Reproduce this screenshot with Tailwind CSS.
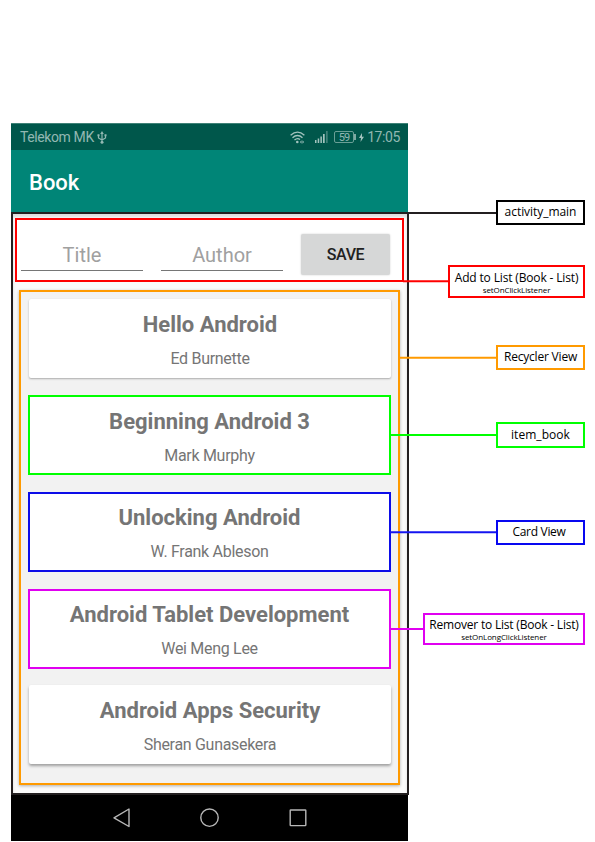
<!DOCTYPE html>
<html lang="en">
<head>
<meta charset="utf-8">
<title>Book</title>
<script src="https://cdn.jsdelivr.net/npm/@tailwindcss/browser@4"></script>
</head>
<body class="relative h-[842px] w-[595px] overflow-hidden bg-white pt-[123px] pl-[11px] font-['Roboto',sans-serif]">
<div class="flex h-[718px] w-[397px] flex-col bg-[#fafafa]">
  <header class="flex h-[27px] shrink-0 items-center border-t border-[#3f8277] bg-[#00574b] pr-[8px] pl-[9px] text-[14px] text-[#92b8b2]">
    <span class="tracking-[-0.400px] whitespace-nowrap">Telekom MK</span>
    <svg class="ml-[3px] h-[13px] w-[10px]" viewBox="0 0 9 13" fill="none" stroke="#92b8b2" stroke-width="1.200"><path d="M4.500 2v9M1 4v3l3.500 2L8 7V4"/><path d="M2.700 3l1.800-3L6.300 3zM0 3.300h2v2H0zM7 3.300h2v2H7z" fill="#92b8b2" stroke="none"/><circle cx="4.500" cy="11.300" r="1.500" fill="#92b8b2" stroke="none"/></svg>
    <div class="ml-auto flex items-center">
      <svg class="h-[13px] w-[15px]" viewBox="0 0 15 13" fill="none" stroke="#a3c3be" stroke-width="1.300"><path d="M.6 4.200Q7.500-2 14.400 4.200M2.500 6.700Q7.500 2.200 12.500 6.700M4.500 9Q7.500 6.400 10 8.600"/><circle cx="7.300" cy="11" r="1.300" fill="#a3c3be" stroke="none"/><path d="M10 11l1.500-1.800v3.600zM14 11l-1.500-1.800v3.600z" fill="#a3c3be" stroke="none"/></svg>
      <svg class="ml-[10px] h-[12px] w-[13px]" viewBox="0 0 13 12" fill="#a3c3be"><path d="M0 9h1.500v3H0zM2.700 7.500h1.500V12H2.700zM5.400 5.500h1.500V12H5.400zM8 3h1.700v9H8z"/><path d="M11 0h1.700v12H11z" opacity=".4"/></svg>
      <div class="ml-[6px] flex h-[12px] w-[20px] items-center justify-center rounded-[2px] border border-[#6a9f96] text-[11px] leading-none tracking-[-0.800px]">59</div>
      <div class="h-[6px] w-[2px] bg-[#7eaaa3]"></div>
      <svg class="ml-[3px] h-[9px] w-[5px]" viewBox="0 0 5 9" fill="#a3c3be"><path d="M3 0L0 5h2L1.500 9L5 3.700H3z"/></svg>
      <span class="ml-[3px] text-[14px] tracking-[-0.400px]">17:05</span>
    </div>
  </header>
  <div class="flex h-[62px] shrink-0 items-center bg-[#008577] pt-[3px] pl-[18px] text-[22px] font-medium text-white">Book</div>
  <main class="-mr-px flex h-[583px] shrink-0 flex-col border-2 border-[#231f20] bg-[#fafafa] pt-[4px] pl-[2px] shadow-[inset_0_3px_3px_rgba(0,0,0,0.12)]">
    <form class="flex h-[64px] w-[389px] border-2 border-[#ff0000] bg-white pl-[4px]">
      <div class="mt-[19px] h-[32px] w-[122px] border-b border-[#767676] text-center text-[20px] leading-[33px] text-[#a0a0a0]">Title</div>
      <div class="mt-[19px] ml-[18px] h-[32px] w-[122px] border-b border-[#767676] text-center text-[20px] leading-[33px] text-[#a0a0a0]">Author</div>
      <div class="mt-[14px] ml-[18px] flex h-[41px] w-[89px] items-center justify-center rounded-[2px] bg-[#d6d7d7] pt-px text-[16px] font-medium tracking-[-0.400px] text-[#212121] shadow-[0_0_2px_rgba(0,0,0,0.2)]">SAVE</div>
    </form>
    <section class="mt-[8px] ml-[4px] flex h-[495px] w-[381px] flex-col gap-[17px] border-2 border-[#ff9a00] bg-[#f2f2f2] px-[7px] pt-[6px] shadow-[0_1px_3px_rgba(0,0,0,0.3)]">
      <article class="mt-px ml-px flex h-[79px] shrink-0 flex-col items-center rounded-[2px] bg-white pt-[12px] text-[#757575] shadow-[0_1px_2px_rgba(0,0,0,0.3)]"><h2 class="text-[22px] leading-[28px] font-bold">Hello Android</h2><p class="mt-[10px] text-[16px] leading-[20px] tracking-[-0.300px]">Ed Burnette</p></article>
      <article class="flex h-[80px] shrink-0 flex-col items-center border-2 border-[#00ff00] bg-white pt-[11px] text-[#757575]"><h2 class="text-[22px] leading-[28px] font-bold">Beginning Android 3</h2><p class="mt-[10px] text-[16px] leading-[20px] tracking-[-0.300px]">Mark Murphy</p></article>
      <article class="flex h-[80px] shrink-0 flex-col items-center border-2 border-[#0c0ce8] bg-white pt-[10px] text-[#757575]"><h2 class="text-[22px] leading-[28px] font-bold">Unlocking Android</h2><p class="mt-[10px] text-[16px] leading-[20px] tracking-[-0.300px]">W. Frank Ableson</p></article>
      <article class="flex h-[80px] shrink-0 flex-col items-center border-2 border-[#e000f0] bg-white pt-[10px] text-[#757575]"><h2 class="text-[22px] leading-[28px] font-bold">Android Tablet Development</h2><p class="mt-[10px] text-[16px] leading-[20px] tracking-[-0.300px]">Wei Meng Lee</p></article>
      <article class="-mt-px ml-px flex h-[79px] shrink-0 flex-col items-center rounded-[2px] bg-white pt-[12px] text-[#757575] shadow-[0_2px_3px_rgba(0,0,0,0.35)]"><h2 class="text-[22px] leading-[28px] font-bold">Android Apps Security</h2><p class="mt-[10px] text-[16px] leading-[20px] tracking-[-0.300px]">Sheran Gunasekera</p></article>
    </section>
  </main>
  <nav class="flex grow items-center bg-black">
    <svg class="h-[46px] w-[397px]" viewBox="0 0 397 46" fill="none" stroke="#b8b8b8" stroke-width="1.400" stroke-linejoin="round"><path d="M118 14v17.500L103 22.800z"/><circle cx="198.500" cy="22.700" r="8.700"/><rect x="279.200" y="15" width="15.600" height="15.600" rx=".6"/></svg>
  </nav>
</div>

<svg class="absolute top-0 left-0 h-[842px] w-[595px]" viewBox="0 0 595 842" fill="none" stroke-width="2"><path d="M407 213H497" stroke="#231f20"/><path d="M403 281.300H449" stroke="#ff0000"/><path d="M399 357.700H497" stroke="#ff9a00"/><path d="M390 435H497" stroke="#00ff00"/><path d="M390 532.200H497" stroke="#1414f0"/><path d="M390 629H425" stroke="#e000f0"/></svg>
<div class="absolute top-[200px] left-[496px] flex h-[25px] w-[89px] justify-center border-2 border-black bg-white font-['Open_Sans',sans-serif] text-[12px] leading-[20px] text-black"><span class="tracking-[-0.050px]">activity_main</span></div>
<div class="absolute top-[265px] left-[448px] flex h-[33px] w-[137px] flex-col items-center border-2 border-[#ff0000] bg-white font-['Open_Sans',sans-serif] text-black"><span class="mt-[2px] text-[12px] leading-[17px] tracking-[-0.150px] whitespace-nowrap">Add to List (Book - List)</span><span class="text-[8px] leading-[8px] tracking-[-0.100px]">setOnClickListener</span></div>
<div class="absolute top-[345px] left-[496px] flex h-[25px] w-[89px] justify-center border-2 border-[#ff9a00] bg-white font-['Open_Sans',sans-serif] text-[12px] leading-[20px] text-black"><span class="tracking-[-0.200px]">Recycler View</span></div>
<div class="absolute top-[422px] left-[496px] flex h-[26px] w-[89px] justify-center border-2 border-[#00ff00] bg-white font-['Open_Sans',sans-serif] text-[12px] leading-[21px] text-black"><span class="tracking-[0.050px]">item_book</span></div>
<div class="absolute top-[520px] left-[496px] flex h-[25px] w-[89px] justify-center border-2 border-[#0808f0] bg-white pr-[3px] font-['Open_Sans',sans-serif] text-[12px] leading-[20px] text-black"><span class="tracking-[-0.300px]">Card View</span></div>
<div class="absolute top-[613px] left-[423px] flex h-[32px] w-[162px] flex-col items-center border-2 border-[#e000f0] bg-white font-['Open_Sans',sans-serif] text-black"><span class="mt-px text-[12px] leading-[17px] tracking-[-0.200px] whitespace-nowrap">Remover to List (Book - List)</span><span class="text-[8px] leading-[8px] tracking-[-0.100px]">setOnLongClickListener</span></div>
</body>
</html>
